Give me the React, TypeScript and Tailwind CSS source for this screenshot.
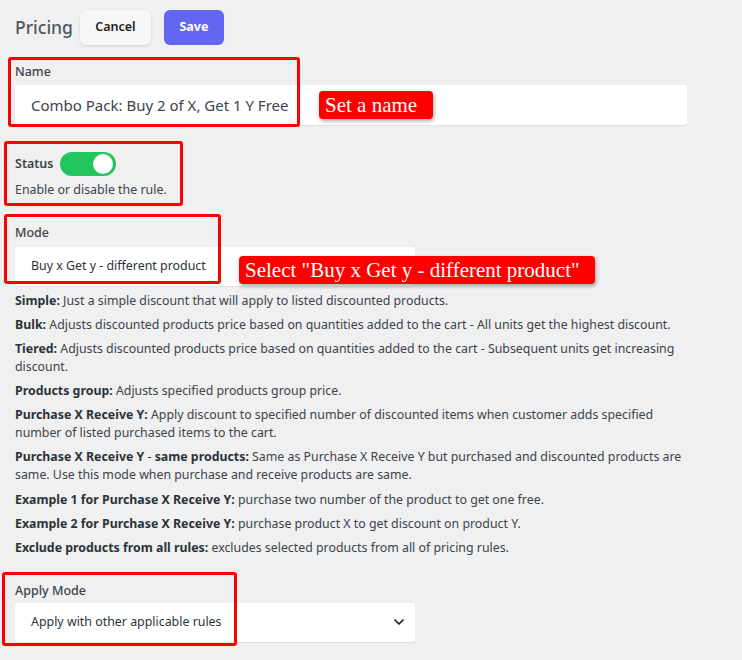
import type { ReactNode } from "react";

type Help = { term: ReactNode; text: string };

const helpItems: Help[] = [
  { term: "Simple:", text: "Just a simple discount that will apply to listed discounted products." },
  {
    term: "Bulk:",
    text: "Adjusts discounted products price based on quantities added to the cart - All units get the highest discount.",
  },
  {
    term: "Tiered:",
    text: "Adjusts discounted products price based on quantities added to the cart - Subsequent units get increasing discount.",
  },
  { term: "Products group:", text: "Adjusts specified products group price." },
  {
    term: "Purchase X Receive Y:",
    text: "Apply discount to specified number of discounted items when customer adds specified number of listed purchased items to the cart.",
  },
  {
    term: (
      <>
        Purchase X Receive Y <span className="font-normal">-</span> same products:
      </>
    ),
    text: "Same as Purchase X Receive Y but purchased and discounted products are same. Use this mode when purchase and receive products are same.",
  },
  { term: "Example 1 for Purchase X Receive Y:", text: "purchase two number of the product to get one free." },
  { term: "Example 2 for Purchase X Receive Y:", text: "purchase product X to get discount on product Y." },
  { term: "Exclude products from all rules:", text: "excludes selected products from all of pricing rules." },
];

function Chevron() {
  return (
    <svg viewBox="0 0 24 24" className="h-[16px] w-[16px]" fill="none" stroke="#1e1e1e" strokeWidth="2.6" strokeLinecap="round" strokeLinejoin="round">
      <path d="M6 9l6 6 6-6" />
    </svg>
  );
}

function SelectBox({ value }: { value: string }) {
  return (
    <div className="flex h-[39px] w-[400px] items-center justify-between rounded-[3px] bg-white pl-4 pr-[8px] text-[12.4px] text-[#2c3338] shadow-[0_1px_1px_rgba(0,0,0,0.06)]">
      <span>{value}</span>
      <Chevron />
    </div>
  );
}

function Callout({ children, className }: { children: ReactNode; className: string }) {
  return (
    <div
      className={`absolute flex items-center rounded-[4px] bg-[#ff0000] px-[6px] font-['Liberation_Serif',serif] text-[21px] leading-none text-white shadow-[1px_2px_4px_rgba(0,0,0,0.35)] ${className}`}
    >
      {children}
    </div>
  );
}

export default function App() {
  return (
    <div className="relative min-h-[660px] w-[742px] bg-[#f0f0f1] px-[15px] pt-[10px] font-['Noto_Sans',sans-serif] text-[#3c434a]">
      <div className="flex items-center">
        <h1 className="text-[17.5px] font-medium text-[#50575e]">Pricing</h1>
        <button className="ml-[7px] h-[35px] w-[71px] rounded-[6px] bg-[#f6f6f6] text-[12.5px] font-semibold text-[#1e1e1e] shadow-[0_1px_3px_rgba(0,0,0,0.12)]">
          Cancel
        </button>
        <button className="ml-[13px] h-[35px] w-[60px] rounded-[6px] bg-[#6366f1] text-[12.5px] font-bold text-white">
          Save
        </button>
      </div>

      <section className="mt-[18px]">
        <label className="block text-[12.5px] font-medium leading-[18px]">Name</label>
        <div className="mt-[4px] flex h-[40px] w-[672px] items-center rounded-[3px] bg-white pl-4 text-[15px] text-[#3c434a] shadow-[0_1px_1px_rgba(0,0,0,0.07)]">
          Combo Pack: Buy 2 of X, Get 1 Y Free
        </div>
      </section>

      <section className="mt-[27px]">
        <div className="flex items-center gap-[7px]">
          <span className="text-[12.5px] font-semibold">Status</span>
          <span className="relative inline-flex h-[24px] w-[56px] items-center rounded-full bg-[#22c55e]">
            <span className="absolute right-[3px] h-[20px] w-[20px] rounded-full bg-white" />
          </span>
        </div>
        <p className="mt-[5px] text-[12.4px] leading-[18px]">Enable or disable the rule.</p>
      </section>

      <section className="mt-[25px]">
        <label className="block text-[12.5px] font-medium leading-[18px]">Mode</label>
        <div className="mt-[5px]">
          <SelectBox value="Buy x Get y - different product" />
        </div>
        <div className="mt-[6px] flex w-[675px] flex-col gap-[6.1px] text-[12.35px] leading-[18px]">
          {helpItems.map((item, i) => (
            <p key={i}>
              <strong className="font-bold text-[#2c3338]">{item.term}</strong> {item.text}
            </p>
          ))}
        </div>
      </section>

      <section className="mt-[25px]">
        <label className="block text-[12.5px] font-medium leading-[18px]">Apply Mode</label>
        <div className="mt-[3px]">
          <SelectBox value="Apply with other applicable rules" />
        </div>
      </section>

      {/* annotation boxes */}
      <div className="pointer-events-none absolute left-[8px] top-[57px] h-[70px] w-[292px] rounded-[3px] border-[3px] border-[#ff0000]" />
      <div className="pointer-events-none absolute left-[4px] top-[141px] h-[65px] w-[179px] rounded-[3px] border-[3px] border-[#ff0000]" />
      <div className="pointer-events-none absolute left-[4px] top-[214px] h-[70px] w-[217px] rounded-[3px] border-[3px] border-[#ff0000]" />
      <div className="pointer-events-none absolute left-[2px] top-[572px] h-[74px] w-[235px] rounded-[3px] border-[3px] border-[#ff0000]" />

      <Callout className="left-[319px] top-[91px] h-[28px] w-[114px]">Set a name</Callout>
      <Callout className="left-[239px] top-[256px] h-[28px] w-[356px]">Select "Buy x Get y - different product"</Callout>
    </div>
  );
}
